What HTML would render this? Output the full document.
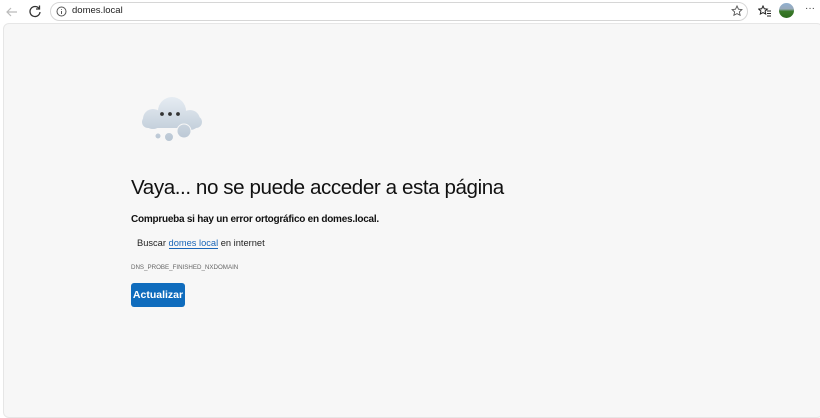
<!DOCTYPE html>
<html><head><meta charset="utf-8"><style>
*{margin:0;padding:0;box-sizing:border-box}
body{width:820px;height:412px;background:#fff;font-family:"Liberation Sans",sans-serif;position:relative;overflow:hidden}
.top{position:absolute;left:0;top:0;width:820px;height:24px;background:#fff}
.addr{position:absolute;left:50px;top:2px;width:698px;height:19px;border:1px solid #d6d6d6;border-radius:10px;background:#fff}
.addr .u{position:absolute;left:21px;top:2px;font-size:9.5px;color:#222}
.page{position:absolute;left:3px;top:23px;width:820px;height:395px;background:#f7f7f7;border:1px solid #e6e6e6;border-radius:6px}
h1{position:absolute;left:131px;top:176px;font-size:20.6px;font-weight:normal;color:#111;letter-spacing:-0.42px;white-space:nowrap}
.p1{position:absolute;left:131px;top:214px;font-size:10px;font-weight:bold;color:#111;letter-spacing:-0.25px}
.p2{position:absolute;left:137px;top:238px;font-size:9.3px;color:#222}
.p2 a{color:#1a66b8;text-decoration:none;border-bottom:1px solid #1a66b8}
.p3{position:absolute;left:131px;top:264px;font-size:6.2px;color:#666}
.btn{position:absolute;left:131px;top:283px;width:54px;height:24px;background:#0f6cbd;border-radius:3px;color:#fff;font-size:10.5px;font-weight:bold;text-align:center;line-height:24px}
</style></head><body>
<div class="top">
<svg style="position:absolute;left:5px;top:5px" width="14" height="14" viewBox="0 0 14 14"><path d="M12 7H2M6 3L2 7l4 4" stroke="#bbb" stroke-width="1.2" fill="none"/></svg>
<svg style="position:absolute;left:28px;top:4px" width="14" height="14" viewBox="0 0 14 14"><path d="M11 4.5A5 5 0 1 0 12 8" stroke="#333" stroke-width="1.3" fill="none"/><path d="M11.5 1.5v3.5H8" stroke="#333" stroke-width="1.3" fill="none"/></svg>
<div class="addr"><svg style="position:absolute;left:5px;top:3px" width="11" height="11" viewBox="0 0 11 11"><circle cx="5.5" cy="5.5" r="4.5" stroke="#555" fill="none"/><path d="M5.5 5v3M5.5 3v.8" stroke="#555"/></svg><span class="u">domes.local</span></div>
<svg style="position:absolute;left:731px;top:5px" width="12" height="12" viewBox="0 0 12 12"><path d="M6 1l1.5 3.2 3.4.4-2.5 2.3.7 3.4L6 8.6 2.9 10.3l.7-3.4L1.1 4.6l3.4-.4z" stroke="#555" fill="none" stroke-width=".9"/></svg>
<svg style="position:absolute;left:758px;top:5px" width="14" height="12" viewBox="0 0 14 12"><path d="M5 1l1.3 2.8 3 .3-2.2 2 .6 3L5 7.6 2.3 9.1l.6-3-2.2-2 3-.3z" stroke="#222" fill="none" stroke-width="1"/><path d="M9 6h4M9 8.5h4M9 11h4" stroke="#222"/></svg>
<div style="position:absolute;left:779px;top:3px;width:15px;height:15px;border-radius:50%;background:linear-gradient(#8fb0d0 0,#9ab 40%,#3a7a2a 55%,#2d6a1e 100%)"></div>
<div style="position:absolute;left:805px;top:3px;font-size:10px;color:#333">···</div>
</div>
<div class="page"></div>
<svg style="position:absolute;left:0;top:0" width="820" height="412">
<defs><linearGradient id="g" x1="0" y1="95" x2="0" y2="145" gradientUnits="userSpaceOnUse"><stop offset="0" stop-color="#e8eef4"/><stop offset="1" stop-color="#b4c2d0"/></linearGradient></defs>
<g fill="url(#g)">
<circle cx="172" cy="111" r="14"/>
<circle cx="153" cy="119" r="10"/>
<circle cx="190" cy="120" r="10"/>
<rect x="142" y="116" width="60" height="12" rx="6"/>
</g>
<g fill="url(#g)" stroke="#f7f7f7" stroke-width="1">
<circle cx="184" cy="131" r="7"/>
<circle cx="169" cy="137" r="4.5"/>
<circle cx="158" cy="136" r="3"/>
</g>
<circle cx="162" cy="114" r="1.9" fill="#333"/><circle cx="170" cy="114" r="1.9" fill="#333"/><circle cx="178" cy="114" r="1.9" fill="#333"/>
</svg>
<h1>Vaya... no se puede acceder a esta página</h1>
<div class="p1">Comprueba si hay un error ortográfico en domes.local.</div>
<div class="p2">Buscar <a>domes local</a> en internet</div>
<div class="p3">DNS_PROBE_FINISHED_NXDOMAIN</div>
<div class="btn">Actualizar</div>
</body></html>
